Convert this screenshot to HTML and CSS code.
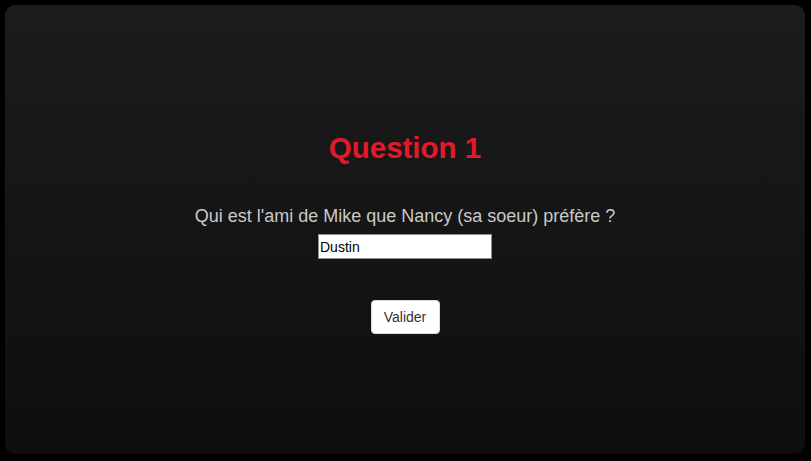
FILE: index.html
```html
<!DOCTYPE html>
<html lang="fr">
<head>
<meta charset="utf-8">
<title>Question 1</title>
<link rel="stylesheet" href="styles.css">
</head>
<body>
<main class="card">
  <h1 class="title">Question 1</h1>
  <p class="question">Qui est l'ami de Mike que Nancy (sa soeur) préfère ?</p>
  <input class="answer" type="text" value="Dustin">
  <button class="submit" type="button">Valider</button>
</main>
</body>
</html>
```
FILE: styles.css
```css
html, body {
  margin: 0;
  padding: 0;
  background: #000;
}
body {
  padding: 5px;
  font-family: "Liberation Sans", Arial, sans-serif;
}
.card {
  width: 800px;
  height: 449px;
  box-sizing: border-box;
  border-radius: 10px;
  background: linear-gradient(to bottom, #1c1c1c, #0e0e0e);
  display: flex;
  flex-direction: column;
  align-items: center;
  justify-content: center;
  padding-top: 6px;
}
.title {
  margin: 0;
  font-size: 29.5px;
  line-height: 34px;
  font-weight: bold;
  color: #e3192b;
}
.question {
  margin: 40px 0 0;
  font-size: 18px;
  line-height: 22px;
  color: #c9c9c9;
}
.answer {
  margin: 7px 0 0;
  width: 174px;
  height: 25px;
  box-sizing: border-box;
  border: 1px solid #8f8f8f;
  padding: 0 1px;
  font-family: "Liberation Sans", Arial, sans-serif;
  font-size: 14px;
  color: #000;
  background: #fff;
  outline: none;
}
.submit {
  margin: 41px 0 0;
  width: 69px;
  height: 34px;
  box-sizing: border-box;
  border: 1px solid #ddd;
  border-radius: 4px;
  background: #fff;
  font-family: "Liberation Sans", Arial, sans-serif;
  font-size: 14px;
  color: #333;
  padding: 0;
}
```
